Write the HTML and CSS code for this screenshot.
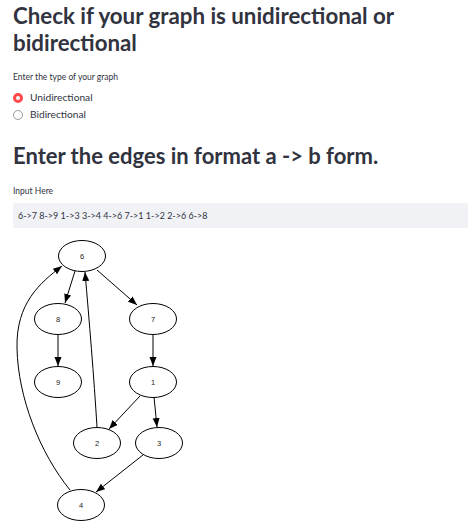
FILE: index.html
```html
<!DOCTYPE html>
<html>
<head>
<meta charset="utf-8">
<link rel="stylesheet" href="styles.css">
</head>
<body>
<main class="main">
  <h1 class="title">Check if your graph is unidirectional or bidirectional</h1>
  <div class="widget">
    <div class="label">Enter the type of your graph</div>
    <div class="radios">
      <label class="radio"><span class="dot on"></span><span>Unidirectional</span></label>
      <label class="radio"><span class="dot"></span><span>Bidirectional</span></label>
    </div>
  </div>
  <h2 class="subtitle">Enter the edges in format a -&gt; b form.</h2>
  <div class="widget">
    <div class="label label-input">Input Here</div>
    <div class="input">6-&gt;7 8-&gt;9 1-&gt;3 3-&gt;4 4-&gt;6 7-&gt;1 1-&gt;2 2-&gt;6 6-&gt;8</div>
  </div>
  <svg class="graph" width="190" height="285" viewBox="13 240 190 285" xmlns="http://www.w3.org/2000/svg">
    <defs>
      <marker id="arr" markerUnits="userSpaceOnUse" markerWidth="10" markerHeight="8" refX="9" refY="3.5" orient="auto">
        <path d="M0,0 L9,3.5 L0,7 z" fill="#000"/>
      </marker>
    </defs>
    <g fill="none" stroke="#000" stroke-width="1">
      <ellipse cx="82" cy="258" rx="23.5" ry="15.5"/>
      <ellipse cx="58" cy="321" rx="23.5" ry="15.5"/>
      <ellipse cx="153" cy="321" rx="23.5" ry="15.5"/>
      <ellipse cx="58" cy="384" rx="23.5" ry="15.5"/>
      <ellipse cx="153" cy="384" rx="23.5" ry="15.5"/>
      <ellipse cx="97" cy="445" rx="23.5" ry="15.5"/>
      <ellipse cx="159" cy="445" rx="23.5" ry="15.5"/>
      <ellipse cx="81" cy="507" rx="23.5" ry="15.5"/>
      <path d="M75,273 L65,305" marker-end="url(#arr)"/>
      <path d="M97,272 L137,307" marker-end="url(#arr)"/>
      <path d="M58,337 L58,368" marker-end="url(#arr)"/>
      <path d="M153,337 L153,368" marker-end="url(#arr)"/>
      <path d="M140,398 L109,431" marker-end="url(#arr)"/>
      <path d="M154,399 L157,429" marker-end="url(#arr)"/>
      <path d="M143,457 L96,494" marker-end="url(#arr)"/>
      <path d="M97,429 C94,380 89,320 85,274" marker-end="url(#arr)"/>
      <path d="M70,492 C40,455 18,400 17,350 C16,305 40,285 62,268" marker-end="url(#arr)"/>
    </g>
    <g class="nodetext" text-anchor="middle">
      <text x="82" y="260.5">6</text>
      <text x="58" y="323.5">8</text>
      <text x="153" y="323.5">7</text>
      <text x="58" y="386.5">9</text>
      <text x="153" y="386.5">1</text>
      <text x="97" y="447.5">2</text>
      <text x="159" y="447.5">3</text>
      <text x="81" y="509.5">4</text>
    </g>
  </svg>
</main>
</body>
</html>
```
FILE: styles.css
```css
html, body {
  margin: 0;
  padding: 0;
  background: #ffffff;
}
body {
  font-family: Lato, "Open Sans", sans-serif;
  color: #31333f;
  overflow: hidden;
}
.main {
  padding: 0 6px 0 13px;
  display: flex;
  flex-direction: column;
}
.title {
  margin: 0;
  padding-top: 2px;
  font-size: 22.3px;
  line-height: 27px;
  font-weight: 700;
  letter-spacing: 0;
}
.widget {
  display: flex;
  flex-direction: column;
}
.label {
  font-size: 8.5px;
  line-height: 12px;
  margin-top: 15px;
}
.label-input {
  margin-top: 16px;
}
.radios {
  display: flex;
  flex-direction: column;
  gap: 4px;
  margin-top: 8px;
}
.radio {
  display: flex;
  align-items: center;
  gap: 7px;
  font-size: 10.2px;
  line-height: 13px;
}
.dot {
  width: 10px;
  height: 10px;
  box-sizing: border-box;
  border-radius: 50%;
  border: 1px solid #9a9ca3;
  background: #fff;
  flex: none;
}
.dot.on {
  border: 3px solid #ff4b4b;
}
.subtitle {
  margin: 22px 0 0;
  font-size: 22px;
  line-height: 26px;
  font-weight: 700;
  letter-spacing: 0;
}
.input {
  margin-top: 6px;
  background: #f0f2f6;
  height: 25px;
  display: flex;
  align-items: center;
  padding-left: 5px;
  font-size: 9px;
  border-radius: 2px;
}
.graph {
  display: block;
  margin-top: 10px;
}
.nodetext {
  font-family: "Liberation Sans", sans-serif;
  font-size: 7.5px;
  fill: #222;
}
```
